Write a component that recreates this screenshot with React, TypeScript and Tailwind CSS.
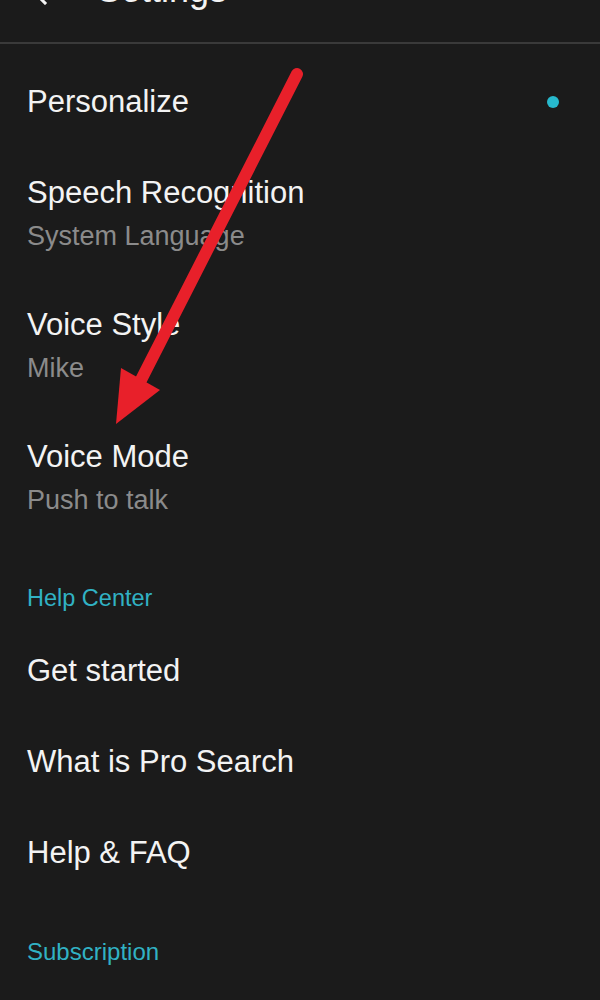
import React from "react";

const font = { fontFamily: '"Liberation Sans", Arial, Helvetica, sans-serif' };

function Row({ title, sub, dot }: { title: string; sub?: string; dot?: boolean }) {
  if (sub) {
    return (
      <div className="pl-[27px] pr-[41px] pt-[27px] pb-[26px]">
        <div className="text-[31px] leading-[36px] text-[#f3f3f3]">{title}</div>
        <div className="mt-[7px] text-[27px] leading-[36px] text-[#8b8b8b]">{sub}</div>
      </div>
    );
  }
  return (
    <div className="flex items-center justify-between pl-[27px] pr-[41px] pt-[27px] pb-[28px]">
      <div className="text-[31px] leading-[36px] text-[#f3f3f3]">{title}</div>
      {dot && <div className="h-[12px] w-[12px] rounded-full bg-[#27b9cd]" />}
    </div>
  );
}

export default function App() {
  return (
    <div className="relative h-[1000px] w-[600px] overflow-hidden bg-[#1b1b1b]" style={font}>
      <div className="flex h-[44px] flex-col border-b-2 border-[#3a3a3a]">
        <div className="-mt-[30px] flex h-[40px] shrink-0 items-center pl-[27px]">
          <svg width="32" height="32" viewBox="0 0 32 32" className="mt-[-2px]">
            <path d="M30 16H4M4 16L18 2M4 16L18 30" stroke="#f3f3f3" strokeWidth="3" fill="none" strokeLinecap="square" />
          </svg>
          <div className="ml-[38px] text-[36px] leading-[40px] text-[#f3f3f3]">Settings</div>
        </div>
      </div>
      <div className="pt-[13px]">
        <Row title="Personalize" dot />
        <Row title="Speech Recognition" sub="System Language" />
        <Row title="Voice Style" sub="Mike" />
        <Row title="Voice Mode" sub="Push to talk" />
        <div className="pl-[27px] pt-[39px] pb-[13px]">
          <div className="text-[23.5px] leading-[30px] text-[#31b2c4]">Help Center</div>
        </div>
        <Row title="Get started" />
        <Row title="What is Pro Search" />
        <Row title="Help & FAQ" />
        <div className="pl-[27px] pt-[38px]">
          <div className="text-[24px] leading-[30px] text-[#31b2c4]">Subscription</div>
        </div>
      </div>
      <svg className="pointer-events-none absolute left-0 top-0" width="600" height="1000" viewBox="0 0 600 1000">
        <line x1="297" y1="74" x2="141" y2="380" stroke="#e8202a" strokeWidth="12" strokeLinecap="round" />
        <polygon points="121,368 160,390 116,424" fill="#e8202a" />
      </svg>
    </div>
  );
}
